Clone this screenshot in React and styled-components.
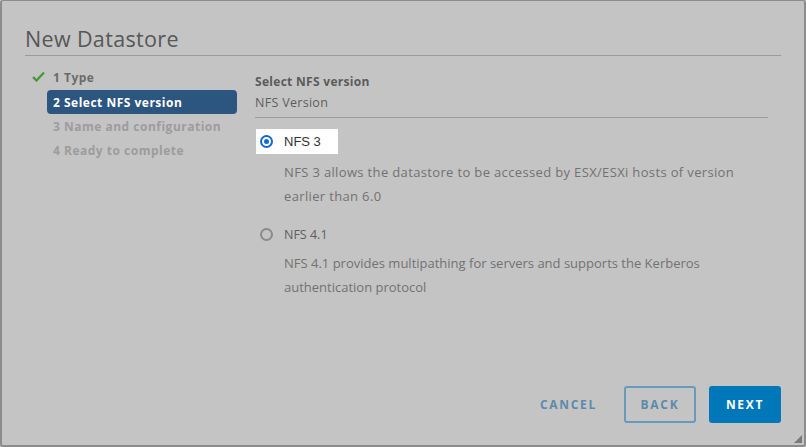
import React from "react";
import styled, { createGlobalStyle } from "styled-components";

const Global = createGlobalStyle`
  html, body { margin: 0; padding: 0; background: #c4c4c4; }
  body { width: 806px; height: 447px; overflow: hidden; font-family: "Open Sans", Lato, sans-serif; }
  * { box-sizing: border-box; }
`;

const Dialog = styled.div`
  position: relative;
  width: 806px;
  height: 447px;
  background: #c4c4c4;
  border: 2px solid #8c8c8c;
  border-top-width: 1px;
  border-radius: 3px;
  padding: 24px 23px 0 23px;
  display: flex;
  flex-direction: column;
`;

const Title = styled.h1`
  margin: 0;
  font-family: "Open Sans", sans-serif;
  font-weight: 400;
  font-size: 21.5px;
  line-height: 28px;
  color: #575757;
  letter-spacing: 0.35px;
  padding-bottom: 3px;
  border-bottom: 1px solid #9b9b9b;
  height: 31px;
`;

const Body = styled.div`
  display: flex;
  flex: 1;
  padding-top: 9px;
`;

const Nav = styled.div`
  width: 230px;
  padding-left: 8px;
  display: flex;
  flex-direction: column;
`;

const NavItem = styled.div`
  display: flex;
  align-items: center;
  height: 24px;
  width: 190px;
  margin-left: 14px;
  margin-top: ${p => (p.$state === "active" ? "1px" : "0")};
  padding-left: 6px;
  font-size: 12px;
  font-weight: 700;
  letter-spacing: 0.5px;
  border-radius: 4px;
  color: ${p => (p.$state === "done" ? "#6b6b6b" : p.$state === "active" ? "#ffffff" : "#9c9c9c")};
  background: ${p => (p.$state === "active" ? "#2c5580" : "transparent")};
  position: relative;
`;

const Check = styled.svg`
  position: absolute;
  left: -15px;
  top: 6px;
`;

const Content = styled.div`
  flex: 1;
  padding-right: 13px;
  padding-top: 9px;
  display: flex;
  flex-direction: column;
`;

const SectionTitle = styled.div`
  font-size: 12px;
  font-weight: 700;
  color: #5b5b5b;
  line-height: 16px;
  letter-spacing: 0.3px;
`;

const SubTitle = styled.div`
  font-size: 12.5px;
  color: #5e5e5e;
  line-height: 16px;
  letter-spacing: 0.3px;
  margin-top: 5px;
  padding-bottom: 6px;
  border-bottom: 1px solid #9b9b9b;
`;

const Option = styled.div`
  display: flex;
  flex-direction: column;
  margin-top: ${p => p.$mt}px;
`;

const RadioRow = styled.label`
  display: inline-flex;
  align-items: center;
  align-self: flex-start;
  height: 25px;
  padding: 0 17px 0 4px;
  background: ${p => (p.$focused ? "#ffffff" : "transparent")};
  font-family: ${p => (p.$focused ? '"Liberation Sans", Arial, sans-serif' : '"Open Sans", sans-serif')};
  font-size: ${p => (p.$focused ? "13px" : "12.5px")};
  color: ${p => (p.$focused ? "#333333" : "#5e5e5e")};
  margin-left: 1px;
`;

const Radio = styled.span`
  width: 13px;
  height: 13px;
  border-radius: 50%;
  border: 2px solid ${p => (p.$checked ? "#1167d6" : "#8a8a8a")};
  display: inline-flex;
  align-items: center;
  justify-content: center;
  margin-right: 11px;
  &::after {
    content: "";
    width: 5px;
    height: 5px;
    border-radius: 50%;
    background: ${p => (p.$checked ? "#1167d6" : "transparent")};
  }
`;

const Desc = styled.p`
  margin: ${p => p.$mt}px 0 0 29px;
  font-size: 13px;
  letter-spacing: ${p => p.$ls}px;
  line-height: 24px;
  color: #727272;
`;

const Footer = styled.div`
  display: flex;
  justify-content: flex-end;
  align-items: center;
  gap: 13px;
  padding: 0 0 22px 0;
`;

const Button = styled.button`
  height: 37px;
  min-width: 72px;
  padding: 0 12px;
  font-family: "Open Sans", sans-serif;
  font-weight: 700;
  font-size: 12px;
  letter-spacing: 1.7px;
  border-radius: 3px;
  cursor: pointer;
  border: 2px solid ${p => (p.$kind === "primary" ? "#0077b8" : p.$kind === "outline" ? "#6a9abb" : "transparent")};
  background: ${p => (p.$kind === "primary" ? "#0077b8" : "transparent")};
  color: ${p => (p.$kind === "primary" ? "#ffffff" : "#5c8aaa")};
`;

const Grip = styled.svg`
  position: absolute;
  right: 2px;
  bottom: 2px;
`;

export default function App() {
  return (
    <>
      <Global />
      <Dialog>
        <Title>New Datastore</Title>
        <Body>
          <Nav>
            <NavItem $state="done">
              <Check width="13" height="11" viewBox="0 0 13 11">
                <path d="M1 6 L4.5 9.5 L12 1.5" fill="none" stroke="#3f9a2f" strokeWidth="2.2" />
              </Check>
              1 Type
            </NavItem>
            <NavItem $state="active">2 Select NFS version</NavItem>
            <NavItem $state="todo">3 Name and configuration</NavItem>
            <NavItem $state="todo">4 Ready to complete</NavItem>
          </Nav>
          <Content>
            <SectionTitle>Select NFS version</SectionTitle>
            <SubTitle>NFS Version</SubTitle>
            <Option $mt={11}>
              <RadioRow $focused>
                <Radio $checked />
                NFS 3
              </RadioRow>
              <Desc $mt={6} $ls={0.35}>NFS 3 allows the datastore to be accessed by ESX/ESXi hosts of version earlier than 6.0</Desc>
            </Option>
            <Option $mt={14}>
              <RadioRow>
                <Radio />
                NFS 4.1
              </RadioRow>
              <Desc $mt={4} $ls={0}>NFS 4.1 provides multipathing for servers and supports the Kerberos authentication protocol</Desc>
            </Option>
          </Content>
        </Body>
        <Footer>
          <Button $kind="flat">CANCEL</Button>
          <Button $kind="outline">BACK</Button>
          <Button $kind="primary">NEXT</Button>
        </Footer>
        <Grip width="8" height="8" viewBox="0 0 8 8">
          <path d="M8 0 L8 8 L0 8 Z" fill="#7a7a7a" />
        </Grip>
      </Dialog>
    </>
  );
}
